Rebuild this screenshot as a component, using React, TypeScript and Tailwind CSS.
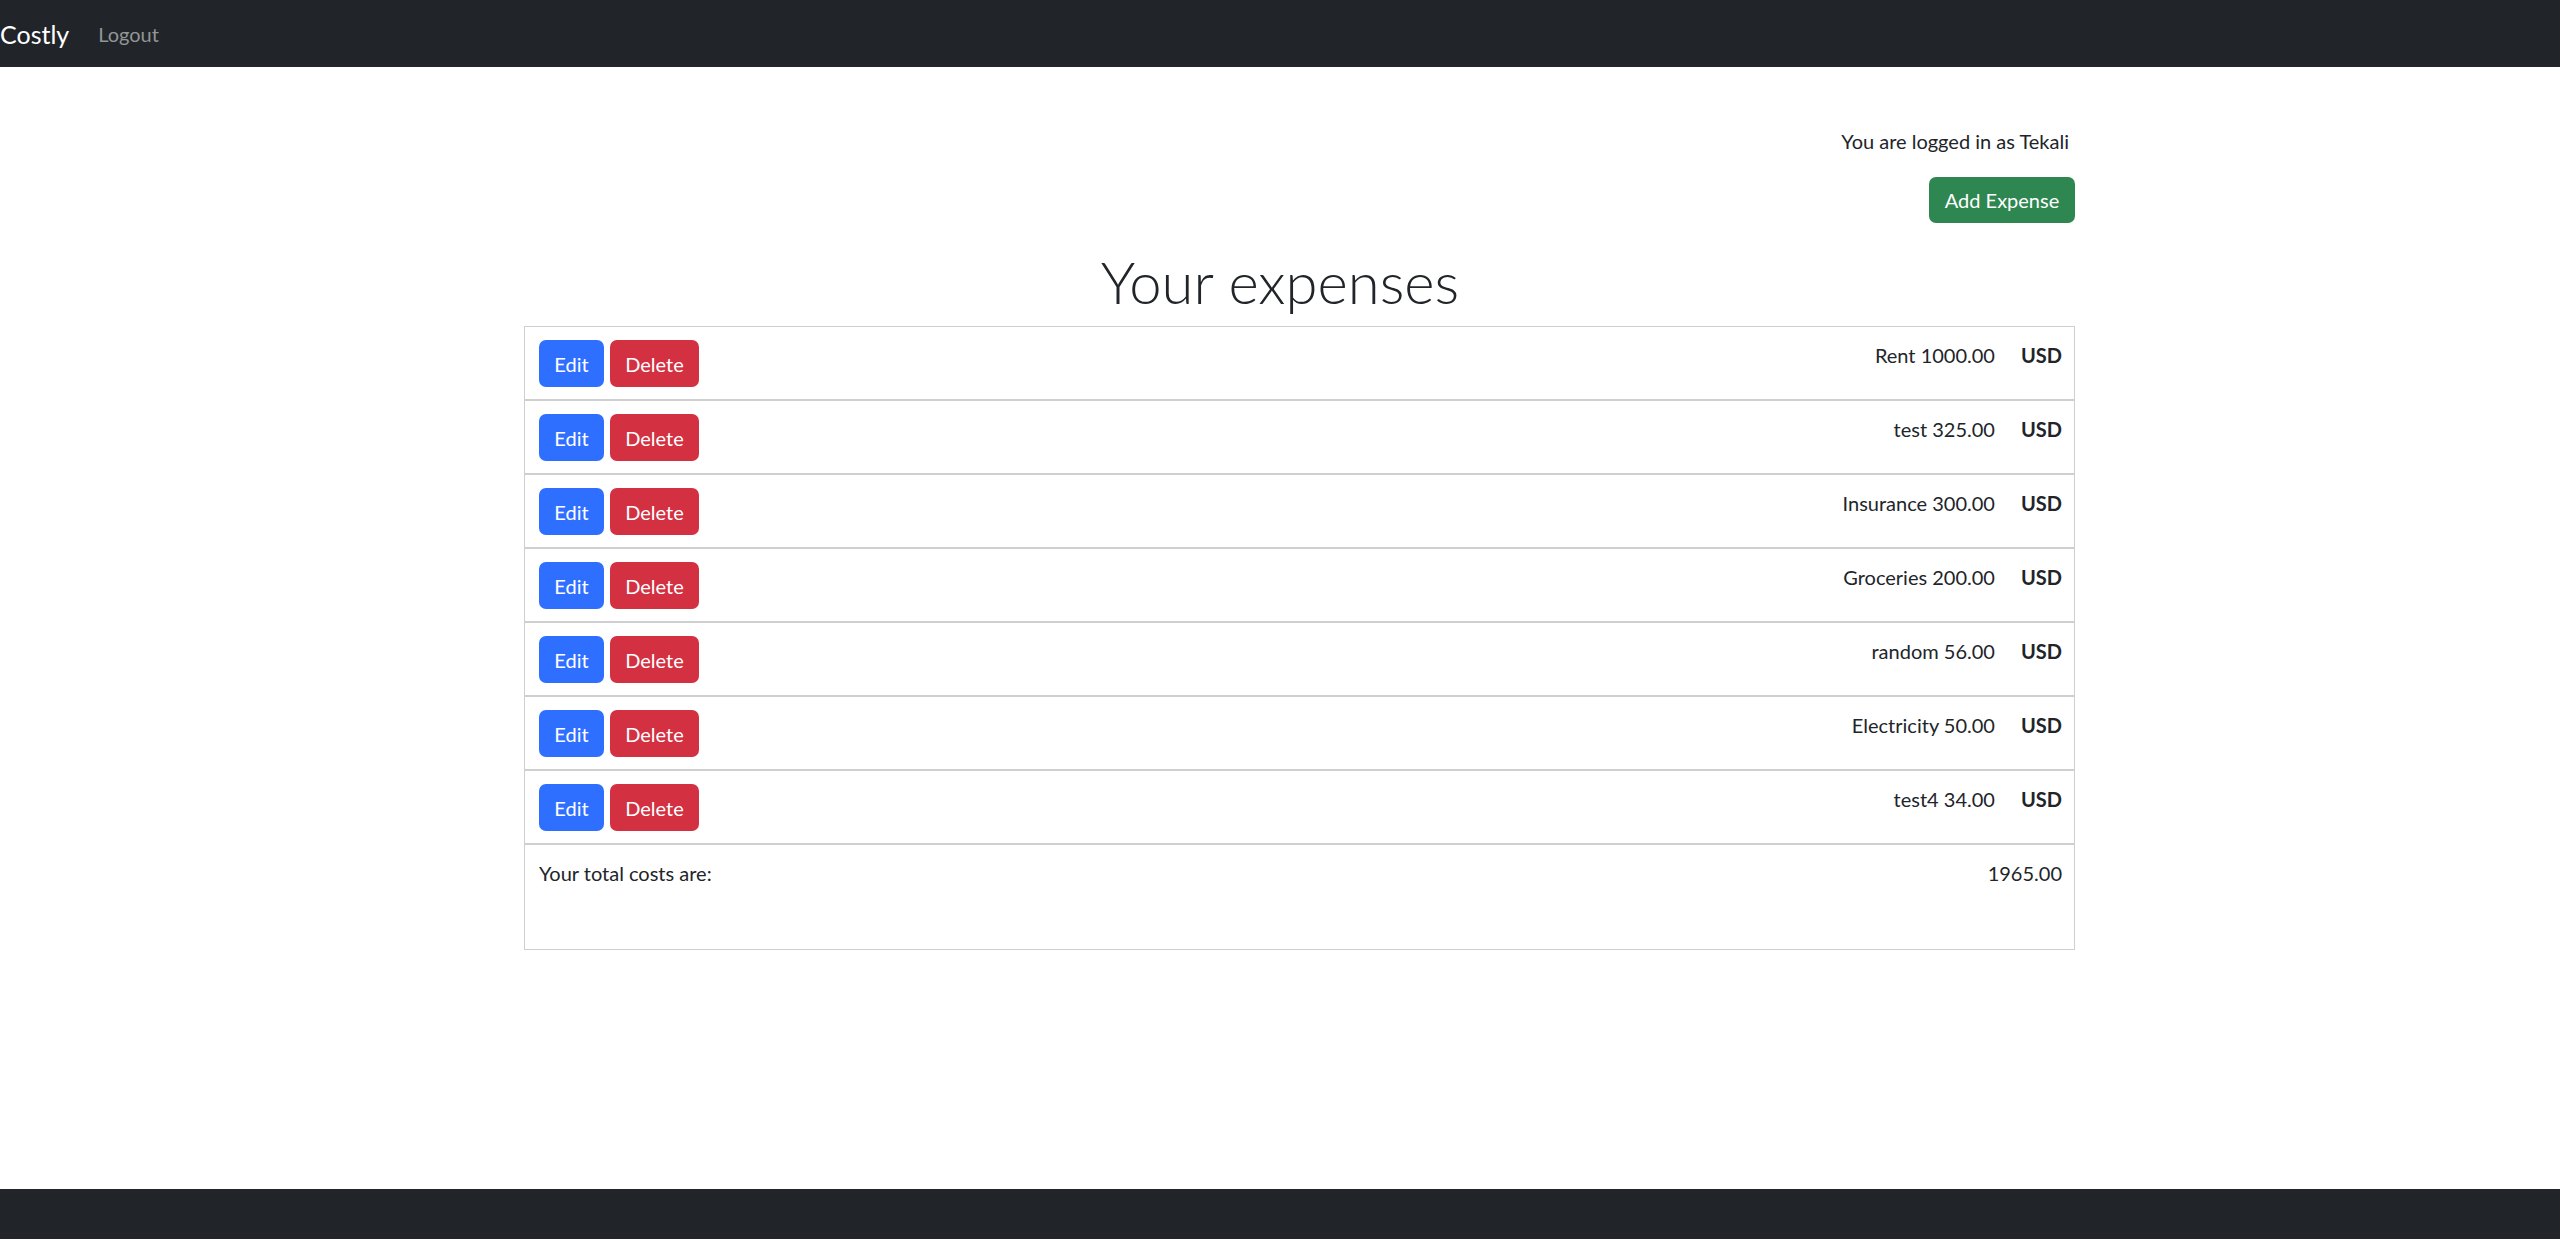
import React from 'react';

const expenses = [
  { name: 'Rent', amount: '1000.00' },
  { name: 'test', amount: '325.00' },
  { name: 'Insurance', amount: '300.00' },
  { name: 'Groceries', amount: '200.00' },
  { name: 'random', amount: '56.00' },
  { name: 'Electricity', amount: '50.00' },
  { name: 'test4', amount: '34.00' },
];

const App = () => {
  return (
    <div className="min-h-screen flex flex-col bg-white text-[#212529] font-['Lato','Liberation_Sans',sans-serif] text-[20px] leading-[30px]">
      <nav className="h-[67px] bg-[#212529] flex items-center">
        <span className="text-[25px] text-white leading-[38px]">Costly</span>
        <a href="#" className="ml-[29px] text-[#939597]">Logout</a>
      </nav>

      <main className="flex-1">
        <div className="ml-[524px] w-[1551px] pt-[59px] flex flex-col items-end">
          <p className="pr-[6px]">You are logged in as Tekali</p>
          <button className="mt-[21px] h-[46px] w-[146px] rounded-[7px] bg-[#2e8650] text-white">
            Add Expense
          </button>
        </div>

        <h1 className="mt-[23px] text-center text-[58px] leading-[72px] font-light">Your expenses</h1>

        <div className="ml-[524px] w-[1551px] mt-[8px]">
          {expenses.map((e) => (
            <div key={e.name} className="h-[74px] border border-[#cfcfcf] pl-[14px] pr-[12px] pt-[13px] flex items-start justify-between">
              <div className="flex gap-[6px]">
                <button className="h-[47px] w-[65px] rounded-[7px] bg-[#2f6fff] text-white">Edit</button>
                <button className="h-[47px] w-[89px] rounded-[7px] bg-[#d33041] text-white">Delete</button>
              </div>
              <div className="flex gap-[26px]">
                <span>
                  {e.name} {e.amount}
                </span>
                <span className="font-bold">USD</span>
              </div>
            </div>
          ))}
          <div className="h-[106px] border border-[#cfcfcf] pl-[14px] pr-[12px] pt-[13px] flex items-start justify-between">
            <span>Your total costs are:</span>
            <span>1965.00</span>
          </div>
        </div>
      </main>

      <footer className="h-[50px] bg-[#212529]" />
    </div>
  );
};

export default App;
